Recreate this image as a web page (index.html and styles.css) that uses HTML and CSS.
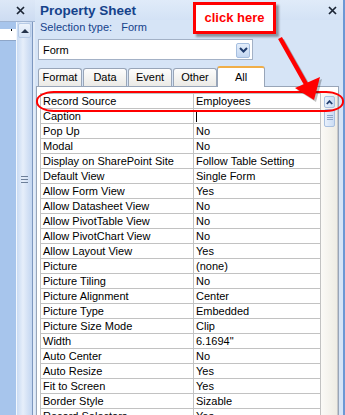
FILE: index.html
```html
<!DOCTYPE html>
<html lang="en">

<head>
    <meta charset="UTF-8" />
    <meta name="viewport" content="width=device-width, initial-scale=1.0" />
    <title>Property Sheet</title>
    <link rel="stylesheet" href="styles.css">
</head>

<body>

    <div class="app">
        <div class="side">
            <div class="side-top">
                <svg class="x-icon" width="9" height="9" viewBox="0 0 9 9"><path d="M1 1 L8 8 M8 1 L1 8" /></svg>
            </div>
            <div class="side-body">
                <div class="side-doc">
                    <div class="side-field"><span class="dot"></span></div>
                </div>
                <div class="side-scroll">
                    <div class="side-up"><span class="tri-up"></span></div>
                    <div class="side-grip"></div>
                </div>
                <div class="side-edge"></div>
            </div>
        </div>

        <div class="sheet">
            <div class="sheet-head">
                <span class="sheet-title">Property Sheet</span>
                <svg class="x-icon" width="9" height="9" viewBox="0 0 9 9"><path d="M1 1 L8 8 M8 1 L1 8" /></svg>
            </div>
            <div class="sel-type">Selection type:<span class="sel-value">Form</span></div>

            <div class="combo">
                <span class="combo-text">Form</span>
                <span class="combo-btn">
                    <svg width="9" height="6" viewBox="0 0 9 6"><path d="M1 1 L4.5 4.5 L8 1" /></svg>
                </span>
            </div>

            <div class="tabs">
                <div class="tab">Format</div>
                <div class="tab">Data</div>
                <div class="tab">Event</div>
                <div class="tab">Other</div>
                <div class="tab active">All</div>
            </div>

            <div class="panel">
                <div class="grid">
                    <div class="prop"><div class="name">Record Source</div><div class="val">Employees</div></div>
                    <div class="prop"><div class="name">Caption</div><div class="val"><span class="caret"></span></div></div>
                    <div class="prop"><div class="name">Pop Up</div><div class="val">No</div></div>
                    <div class="prop"><div class="name">Modal</div><div class="val">No</div></div>
                    <div class="prop"><div class="name">Display on SharePoint Site</div><div class="val">Follow Table Setting</div></div>
                    <div class="prop"><div class="name">Default View</div><div class="val">Single Form</div></div>
                    <div class="prop"><div class="name">Allow Form View</div><div class="val">Yes</div></div>
                    <div class="prop"><div class="name">Allow Datasheet View</div><div class="val">No</div></div>
                    <div class="prop"><div class="name">Allow PivotTable View</div><div class="val">No</div></div>
                    <div class="prop"><div class="name">Allow PivotChart View</div><div class="val">No</div></div>
                    <div class="prop"><div class="name">Allow Layout View</div><div class="val">Yes</div></div>
                    <div class="prop"><div class="name">Picture</div><div class="val">(none)</div></div>
                    <div class="prop"><div class="name">Picture Tiling</div><div class="val">No</div></div>
                    <div class="prop"><div class="name">Picture Alignment</div><div class="val">Center</div></div>
                    <div class="prop"><div class="name">Picture Type</div><div class="val">Embedded</div></div>
                    <div class="prop"><div class="name">Picture Size Mode</div><div class="val">Clip</div></div>
                    <div class="prop"><div class="name">Width</div><div class="val">6.1694"</div></div>
                    <div class="prop"><div class="name">Auto Center</div><div class="val">No</div></div>
                    <div class="prop"><div class="name">Auto Resize</div><div class="val">Yes</div></div>
                    <div class="prop"><div class="name">Fit to Screen</div><div class="val">Yes</div></div>
                    <div class="prop"><div class="name">Border Style</div><div class="val">Sizable</div></div>
                    <div class="prop"><div class="name">Record Selectors</div><div class="val">Yes</div></div>
                </div>
                <div class="vscroll">
                    <div class="vs-up">
                        <svg width="7" height="5" viewBox="0 0 7 5"><path d="M0.8 4 L3.5 1.2 L6.2 4" /></svg>
                    </div>
                    <div class="vs-thumb"></div>
                </div>
            </div>
        </div>
    </div>

    <!-- annotations drawn over the screenshot -->
    <div class="ring"></div>
    <svg class="arrow" width="345" height="415" viewBox="0 0 345 415">
        <g class="arrow-shadow">
            <line x1="282" y1="40" x2="308" y2="86" />
            <polygon points="297,90 322,79 316,102" />
        </g>
        <g class="arrow-main">
            <line x1="280" y1="38" x2="306" y2="84" />
            <polygon points="295,88 320,77 314,100" />
        </g>
    </svg>
    <div class="callout">click here</div>

</body>

</html>
```

FILE: styles.css
```css
body {
    margin: 0;
    width: 345px;
    height: 415px;
    overflow: hidden;
    position: relative;
    font-family: "Liberation Sans", Arial, sans-serif;
    font-size: 11px;
    color: #000;
    background-color: #a7c5ec;
}

.app {
    display: flex;
    height: 415px;
}

.x-icon path {
    stroke: #1b2535;
    stroke-width: 1.7;
    fill: none;
}

/* left window fragment */

.side {
    width: 35px;
    display: flex;
    flex-direction: column;
}

.side-top {
    height: 21px;
    display: flex;
    align-items: center;
    justify-content: flex-end;
    padding-right: 10px;
    background: linear-gradient(#dde8f7, #cddcf2);
    border-bottom: 1px solid #9fb4d2;
}

.side-body {
    flex: 1;
    display: flex;
}

.side-doc {
    width: 16px;
    background-color: #a7c5ec;
}

.side-field {
    height: 11px;
    background-color: #fff;
    border-bottom: 1px solid #8ea6c8;
    width: 17px;
}

.dot {
    display: block;
    width: 1px;
    height: 2px;
    margin: 7px 0 0 11px;
    background-color: #000;
}

.side-scroll {
    width: 15px;
    border-left: 1px solid #f2f7fd;
    border-right: 1px solid #7d97bf;
    background: linear-gradient(90deg, #c9dbf3, #e6eefa 40%, #c3d6f1);
    padding-top: 1px;
}

.side-up {
    height: 13px;
    margin: 0 1px;
    border: 1px solid #b7cbe6;
    border-radius: 2px;
    background: linear-gradient(#eef4fc, #d3e2f6);
    display: flex;
    align-items: center;
    justify-content: center;
}

.tri-up {
    width: 0;
    height: 0;
    border-left: 4px solid transparent;
    border-right: 4px solid transparent;
    border-bottom: 4px solid #25344c;
}

.side-grip {
    width: 7px;
    height: 7px;
    margin: 138px auto 0;
    background: repeating-linear-gradient(#6d7f99 0, #6d7f99 1px, transparent 1px, transparent 3px);
}

.side-edge {
    width: 2px;
    background-color: #e3ecf8;
}

/* property sheet */

.sheet {
    flex: 1;
    display: flex;
    flex-direction: column;
    background-color: #d6e4f6;
    border-right: 2px solid #6c98d4;
}

.sheet-head {
    height: 20px;
    display: flex;
    align-items: center;
    justify-content: space-between;
    padding: 0 6px 0 5px;
    background: linear-gradient(#e0ebf9, #d3e2f5);
}

.sheet-title {
    font-size: 13.5px;
    font-weight: bold;
    color: #15428b;
}

.sel-type {
    height: 14px;
    line-height: 14px;
    padding-left: 5px;
    color: #15428b;
}

.sel-value {
    margin-left: 9px;
}

.combo {
    width: 213px;
    height: 19px;
    margin: 5px 0 0 3px;
    border: 1px solid #a3b1c6;
    background-color: #fff;
    display: flex;
    align-items: center;
    justify-content: space-between;
}

.combo-text {
    padding-left: 4px;
}

.combo-btn {
    width: 12px;
    height: 13px;
    margin: 1px 2px 0 0;
    border: 1px solid #a6bfe0;
    border-radius: 2px;
    background: linear-gradient(#e4eefb, #c3d7f2);
    display: flex;
    align-items: center;
    justify-content: center;
}

.combo-btn path {
    stroke: #1f3b6c;
    stroke-width: 2;
    fill: none;
}

.tabs {
    display: flex;
    align-items: flex-end;
    gap: 1px;
    height: 20px;
    margin: 6px 0 0 3px;
    position: relative;
    z-index: 1;
}

.tab {
    min-width: 36px;
    height: 17px;
    line-height: 17px;
    padding: 0 3px;
    text-align: center;
    border: 1px solid #98a5b8;
    border-bottom: none;
    border-radius: 3px 3px 0 0;
    background: linear-gradient(#fdfdfd, #ebeae6);
}

.tab.active {
    width: 40px;
    height: 19px;
    line-height: 18px;
    margin-left: -1px;
    margin-bottom: -1px;
    border-top: 2px solid #f0ae48;
    background: #fff;
}

.panel {
    flex: 1;
    display: flex;
    align-items: flex-start;
    margin: 0 4px 0 1px;
    padding: 6px 0 0 3px;
    background-color: #fff;
    border: 1px solid #98a5b8;
    border-bottom: none;
    overflow: hidden;
}

.grid {
    width: 279px;
    border: 1px solid #c2c2c2;
    border-bottom: none;
}

.prop {
    display: grid;
    grid-template-columns: 153px 1fr;
    height: 14px;
    line-height: 14px;
    border-bottom: 1px solid #c2c2c2;
    white-space: nowrap;
    overflow: hidden;
}

.name {
    padding-left: 2px;
    border-right: 1px solid #c2c2c2;
    overflow: hidden;
}

.val {
    padding-left: 2px;
}

.caret {
    display: inline-block;
    width: 1px;
    height: 12px;
    vertical-align: -2px;
    background-color: #000;
}

.vscroll {
    flex: 1;
    align-self: stretch;
    padding: 3px 2px 0 3px;
    background: linear-gradient(90deg, #fbfaf7, #eeece4);
    border-right: 1px solid #c9c9c9;
}

.vs-up,
.vs-thumb {
    border: 1px solid #a9c0e0;
    border-radius: 2px;
    background: linear-gradient(90deg, #e8f0fb, #cadcf4);
}

.vs-up {
    height: 10px;
    display: flex;
    align-items: center;
    justify-content: center;
}

.vs-up path {
    stroke: #1f3b6c;
    stroke-width: 1.8;
    fill: none;
}

.vs-thumb {
    height: 16px;
    margin-top: 1px;
    background:
        linear-gradient(#8ea6c8, #8ea6c8) center 5px / 6px 1px no-repeat,
        linear-gradient(#8ea6c8, #8ea6c8) center 7px / 6px 1px no-repeat,
        linear-gradient(#8ea6c8, #8ea6c8) center 9px / 6px 1px no-repeat,
        linear-gradient(90deg, #e8f0fb, #cadcf4);
}

/* annotations */

.ring {
    position: absolute;
    left: 36px;
    top: 91px;
    width: 304px;
    height: 17px;
    border: 2px solid #f00;
    border-radius: 18px / 10px;
}

.arrow {
    position: absolute;
    left: 0;
    top: 0;
}

.arrow line {
    stroke-width: 4.5;
}

.arrow-shadow line {
    stroke: rgba(0, 0, 0, 0.25);
}

.arrow-shadow polygon {
    fill: rgba(0, 0, 0, 0.25);
}

.arrow-main line {
    stroke: #f00;
}

.arrow-main polygon {
    fill: #f00;
}

.callout {
    position: absolute;
    left: 193px;
    top: 2px;
    width: 77px;
    height: 26px;
    line-height: 26px;
    border: 3px solid #f00;
    background-color: #fff;
    box-shadow: 3px 3px 2px rgba(0, 0, 0, 0.35);
    color: #f00;
    font-size: 13px;
    font-weight: bold;
    text-align: center;
}
```
